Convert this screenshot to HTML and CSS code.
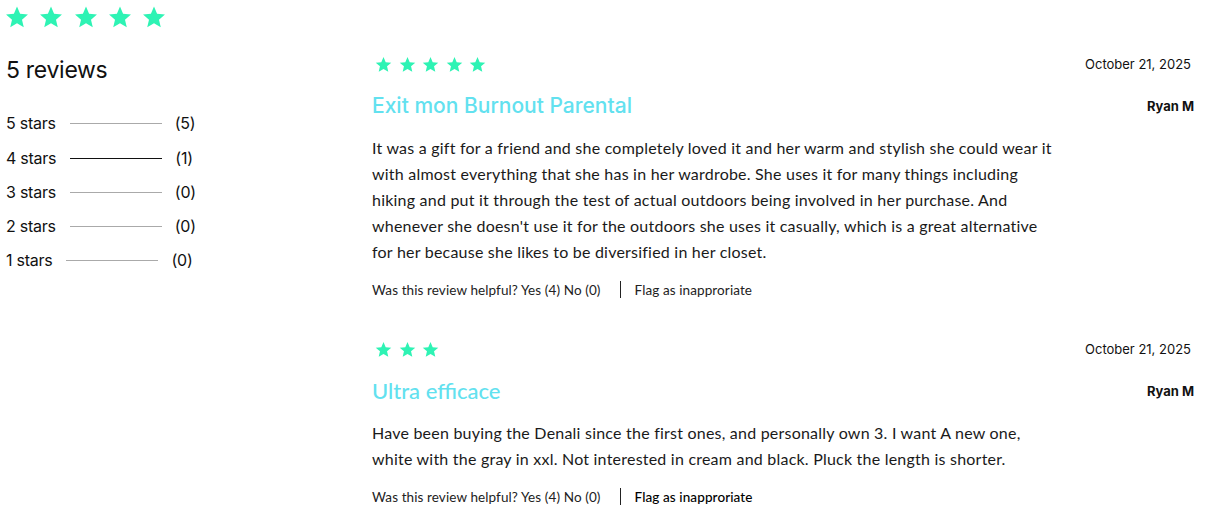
FILE: index.html
```html
<!DOCTYPE html>
<html>
<head>
<meta charset="utf-8">
<link rel="stylesheet" href="styles.css">
</head>
<body>
<svg width="0" height="0" class="defs">
  <defs>
    <symbol id="star" viewBox="0 0 24 24"><path d="M12 1.5l3.09 7.26 7.86.69-5.96 5.18 1.78 7.69L12 18.27l-6.77 4.05 1.78-7.69L1.05 9.45l7.86-.69z"/></symbol>
  </defs>
</svg>
<div class="page">
  <aside class="summary">
    <div class="big-stars">
      <svg class="star-lg"><use href="#star"/></svg>
      <svg class="star-lg"><use href="#star"/></svg>
      <svg class="star-lg"><use href="#star"/></svg>
      <svg class="star-lg"><use href="#star"/></svg>
      <svg class="star-lg"><use href="#star"/></svg>
    </div>
    <h2 class="count">5 reviews</h2>
    <ul class="dist">
      <li><span class="lbl">5 stars</span><span class="bar"></span><span class="n">(5)</span></li>
      <li><span class="lbl">4 stars</span><span class="bar dark"></span><span class="n">(1)</span></li>
      <li><span class="lbl">3 stars</span><span class="bar"></span><span class="n">(0)</span></li>
      <li><span class="lbl">2 stars</span><span class="bar"></span><span class="n">(0)</span></li>
      <li><span class="lbl">1 stars</span><span class="bar"></span><span class="n">(0)</span></li>
    </ul>
  </aside>
  <main class="reviews">
    <article class="review">
      <div class="row">
        <div class="stars">
          <svg class="star-sm"><use href="#star"/></svg>
          <svg class="star-sm"><use href="#star"/></svg>
          <svg class="star-sm"><use href="#star"/></svg>
          <svg class="star-sm"><use href="#star"/></svg>
          <svg class="star-sm"><use href="#star"/></svg>
        </div>
        <span class="date">October 21, 2025</span>
      </div>
      <div class="row title-row">
        <h3 class="title alt">Exit mon Burnout Parental</h3>
        <span class="author">Ryan M</span>
      </div>
      <p class="body">It was a gift for a friend and she completely loved it and her warm and stylish she could wear it with almost everything that she has in her wardrobe. She uses it for many things including hiking and put it through the test of actual outdoors being involved in her purchase. And whenever she doesn't use it for the outdoors she uses it casually, which is a great alternative for her because she likes to be diversified in her closet.</p>
      <div class="helpful"><span>Was this review helpful? Yes (4) No (0)</span><span class="sep"></span><span>Flag as inapproriate</span></div>
    </article>
    <article class="review">
      <div class="row">
        <div class="stars">
          <svg class="star-sm"><use href="#star"/></svg>
          <svg class="star-sm"><use href="#star"/></svg>
          <svg class="star-sm"><use href="#star"/></svg>
        </div>
        <span class="date">October 21, 2025</span>
      </div>
      <div class="row title-row">
        <h3 class="title">Ultra efficace</h3>
        <span class="author">Ryan M</span>
      </div>
      <p class="body">Have been buying the Denali since the first ones, and personally own 3. I want A new one, white with the gray in xxl. Not interested in cream and black. Pluck the length is shorter.</p>
      <div class="helpful"><span>Was this review helpful? Yes (4) No (0)</span><span class="sep"></span><span class="flag-strong">Flag as inapproriate</span></div>
    </article>
  </main>
</div>
</body>
</html>
```
FILE: styles.css
```css
* { box-sizing: border-box; }
html, body { margin: 0; padding: 0; background: #fff; overflow: hidden; }
body { font-family: "Inter", "Liberation Sans", sans-serif; color: #111; }
.defs { position: absolute; width: 0; height: 0; }

.page { display: flex; align-items: flex-start; }

.summary { width: 372px; padding-left: 5px; flex: none; }
.big-stars { display: flex; gap: 10.3px; padding-top: 5px; padding-left: 0; height: 28px; }
.star-lg { width: 24px; height: 24px; fill: #2ef3b4; }

.count { margin: 28px 0 0; padding-left: 1px; font-size: 23px; font-weight: 400; line-height: 28px; letter-spacing: -0.3px; }

.dist { list-style: none; margin: 21px 0 0; padding: 0 0 0 1px; }
.dist li { display: flex; align-items: center; height: 34px; font-size: 16px; letter-spacing: -0.25px; }
.dist li:first-child { height: 36px; }
.dist .bar { width: 92px; height: 1px; background: #aaa; margin: 0 13px 0 14px; }
.dist .bar.dark { background: #111; }

.reviews { flex: 1; padding-top: 53px; padding-right: 24px; }
.review { margin-bottom: 40px; }
.review:last-child { margin-bottom: 0; }
.row { display: flex; justify-content: space-between; align-items: center; }
.stars { display: flex; gap: 6.5px; height: 22px; align-items: center; margin-left: 3px; }
.star-sm { width: 17px; height: 17px; fill: #2ef3b4; }
.date { font-size: 13px; margin-right: 3px; }
.title-row { margin-top: 17px; }
.title { margin: 0; font-family: "Lato", "Raleway", sans-serif; font-weight: 500; font-size: 22px; line-height: 28px; color: #62e1ef; }
.title.alt { font-family: "Inter", sans-serif; font-size: 21px; }
.author { font-size: 13px; font-weight: 700; }

.body { margin: 15px 0 0; max-width: 686px; font-family: "Lato", sans-serif; font-size: 16px; letter-spacing: 0.22px; line-height: 26px; color: #1a1a1a; }

.helpful { display: flex; align-items: center; margin-top: 16px; font-family: "Lato", sans-serif; font-size: 13.5px; letter-spacing: 0.1px; color: #222; }
.sep { width: 1px; height: 17px; background: #222; margin: 0 14px 0 19px; }
.flag-strong { color: #000; font-weight: 500; }
```
